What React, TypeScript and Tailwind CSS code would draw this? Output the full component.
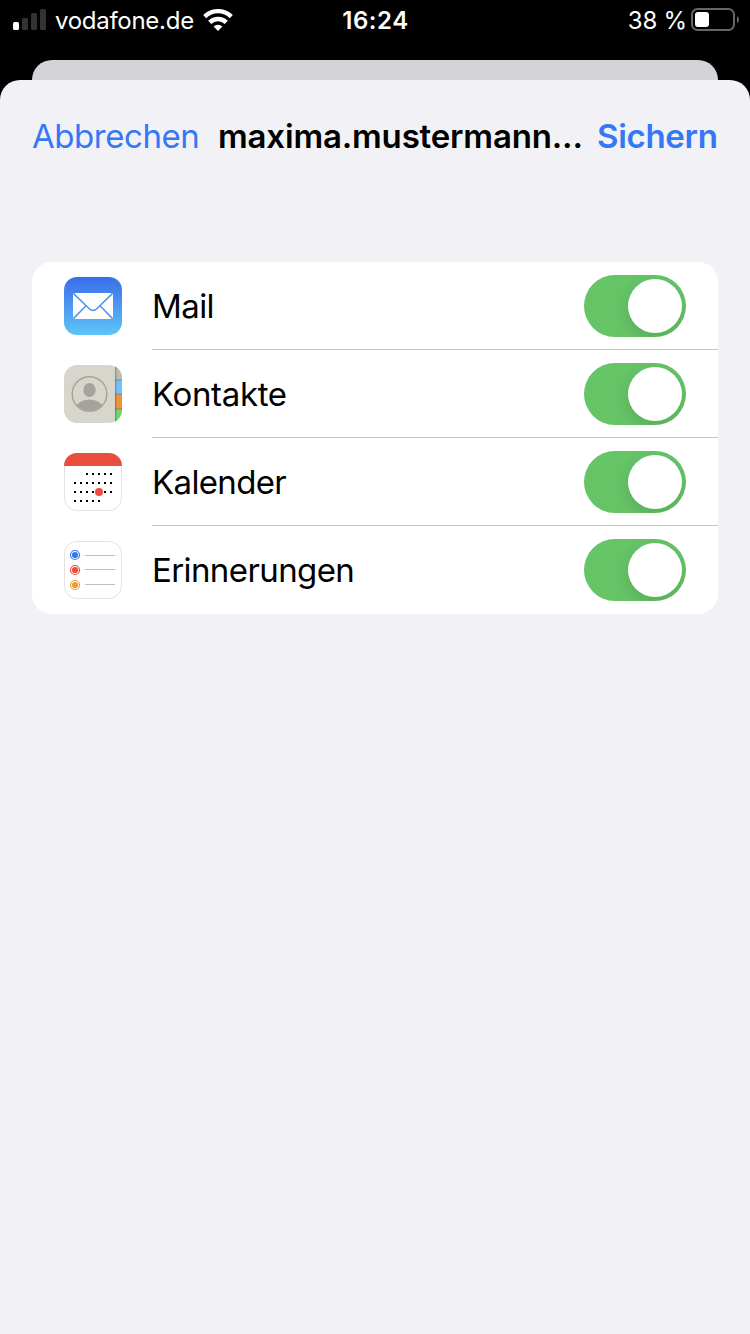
import type { ReactNode } from 'react';

function SignalIcon() {
  return (
    <svg width="33" height="21" viewBox="0 0 33 21" className="shrink-0">
      <rect x="0" y="13" width="6" height="8" rx="1.5" fill="#fff" />
      <rect x="9" y="9" width="6" height="12" rx="1.5" fill="#333" />
      <rect x="18" y="4" width="6" height="17" rx="1.5" fill="#333" />
      <rect x="27" y="0" width="6" height="21" rx="1.5" fill="#333" />
    </svg>
  );
}

function WifiIcon() {
  return (
    <svg width="30" height="22" viewBox="0 0 30 22" className="shrink-0">
      <g fill="none" stroke="#fff" strokeWidth="4.4">
        <path d="M1.7 7.6 A19 19 0 0 1 28.3 7.6" />
        <path d="M6.7 13.3 A12 12 0 0 1 23.3 13.3" />
      </g>
      <path d="M10.6 17.4 A6.4 6.4 0 0 1 19.4 17.4 L15 22 Z" fill="#fff" />
    </svg>
  );
}

function BatteryIcon() {
  return (
    <svg width="48" height="24" viewBox="0 0 48 24" className="shrink-0">
      <rect x="1" y="1" width="42" height="21" rx="5.5" fill="none" stroke="#666" strokeWidth="2" />
      <rect x="4" y="4" width="14" height="15" rx="3" fill="#fff" />
      <path d="M46 8 Q48 9 48 11.5 Q48 14 46 15 Z" fill="#666" />
    </svg>
  );
}

function MailIcon() {
  return (
    <svg width="58" height="58" viewBox="0 0 58 58">
      <defs>
        <linearGradient id="mail" x1="0" y1="0" x2="0" y2="1">
          <stop offset="0" stopColor="#3a6de9" />
          <stop offset="1" stopColor="#5ec4f8" />
        </linearGradient>
      </defs>
      <rect width="58" height="58" rx="13" fill="url(#mail)" />
      <rect x="9" y="16" width="40" height="26" rx="0.8" fill="#fff" />
      <g fill="none" stroke="#4c94ee" strokeWidth="1.5">
        <path d="M9.4 16.4 L25 31.5 Q29 35.5 33 31.5 L48.6 16.4" />
        <path d="M9.4 41.6 L21.8 29 M48.6 41.6 L36.2 29" />
      </g>
    </svg>
  );
}

function ContactsIcon() {
  return (
    <svg width="58" height="58" viewBox="0 0 58 58">
      <defs>
        <clipPath id="contactsShape">
          <rect width="58" height="58" rx="13" />
        </clipPath>
        <clipPath id="portrait">
          <circle cx="25.5" cy="29" r="16.8" />
        </clipPath>
        <linearGradient id="tabShade" x1="0" y1="0" x2="1" y2="0">
          <stop offset="0" stopColor="#000" stopOpacity="0.3" />
          <stop offset="1" stopColor="#000" stopOpacity="0" />
        </linearGradient>
      </defs>
      <g clipPath="url(#contactsShape)">
        <rect width="58" height="58" fill="#d6d6cd" />
        <rect x="51" width="7" height="15" fill="#bcbcb3" />
        <rect x="51" y="15" width="7" height="14.5" fill="#72c1f8" />
        <rect x="51" y="29.5" width="7" height="14.5" fill="#ed9536" />
        <rect x="51" y="44" width="7" height="14" fill="#6fd672" />
        <path d="M51 15 H58 M51 29.3 H58 M51 44 H58" stroke="#665f50" strokeOpacity="0.55" strokeWidth="1" />
        <rect x="51" width="2" height="58" fill="url(#tabShade)" />
      </g>
      <circle cx="25.5" cy="29" r="17.3" fill="none" stroke="#a8a29c" strokeWidth="1.4" />
      <ellipse cx="25.5" cy="25" rx="6.2" ry="7" fill="#a8a29c" />
      <ellipse cx="25.5" cy="44" rx="13.8" ry="9.4" fill="#a8a29c" clipPath="url(#portrait)" />
    </svg>
  );
}

const calendarRows = [
  { y: 21, from: 2 },
  { y: 30, from: 0 },
  { y: 39, from: 0 },
  { y: 48, from: 0, to: 4 },
];

function CalendarIcon() {
  return (
    <svg width="58" height="58" viewBox="0 0 58 58">
      <defs>
        <clipPath id="calendarShape">
          <rect width="58" height="58" rx="13" />
        </clipPath>
      </defs>
      <rect x="0.5" y="0.5" width="57" height="57" rx="12.5" fill="#fff" stroke="#e2e2e2" />
      <rect width="58" height="13" fill="#e94e3d" clipPath="url(#calendarShape)" />
      {calendarRows.map(({ y, from, to = 6 }) =>
        [0, 1, 2, 3, 4, 5, 6]
          .filter((i) => i >= from && i <= to)
          .map((i) => <rect key={`${y}-${i}`} x={10 + i * 6} y={y - 1} width="2" height="2" fill="#000" />),
      )}
      <circle cx="35" cy="39" r="4" fill="#e94e3d" />
    </svg>
  );
}

const reminderRows = [
  { y: 14, line: 14.5, color: '#3478f6' },
  { y: 29, line: 28.5, color: '#e94e3d' },
  { y: 44, line: 43.5, color: '#ee9c38' },
];

function RemindersIcon() {
  return (
    <svg width="58" height="58" viewBox="0 0 58 58">
      <rect x="0.5" y="0.5" width="57" height="57" rx="12.5" fill="#fff" stroke="#e2e2e2" />
      {reminderRows.map(({ y, line, color }) => (
        <g key={y}>
          <circle cx="11" cy={y} r="4.5" fill="none" stroke={color} strokeWidth="1.2" />
          <circle cx="11" cy={y} r="3.1" fill={color} />
          <path d={`M21 ${line} H51`} stroke="#bdbdbf" strokeWidth="1" />
        </g>
      ))}
    </svg>
  );
}

function Toggle() {
  return (
    <button
      role="switch"
      aria-checked="true"
      className="flex h-[62px] w-[102px] shrink-0 items-center justify-end overflow-hidden rounded-full bg-[#65c466] pr-1"
    >
      <span className="size-[54px] rounded-full bg-white shadow-[0_6px_16px_rgba(0,0,0,0.12)]" />
    </button>
  );
}

interface RowProps {
  icon: ReactNode;
  label: string;
  tracking: string;
  last?: boolean;
}

function Row({ icon, label, tracking, last }: RowProps) {
  return (
    <div className="flex h-[88px] pl-8">
      <div className="w-[88px] shrink-0 pt-[15px]">{icon}</div>
      <div
        className={`flex flex-1 items-start justify-between pr-8 pt-[13px] ${last ? '' : 'border-b border-[#c6c6c8]'}`}
      >
        <span className={`pt-[11px] text-[33px] leading-[40px] text-black ${tracking}`}>{label}</span>
        <Toggle />
      </div>
    </div>
  );
}

export default function App() {
  return (
    <div className="flex h-[1334px] w-[750px] flex-col overflow-hidden bg-black font-['Inter',sans-serif]">
      <div className="grid h-[60px] shrink-0 grid-cols-[1fr_auto_1fr] items-start text-white">
        <div className="flex items-start pl-[13px] pt-[9px]">
          <SignalIcon />
          <span className="ml-[9px] w-[140px] text-[24px] leading-6 tracking-[-0.28px]">vodafone.de</span>
          <span className="ml-2">
            <WifiIcon />
          </span>
        </div>
        <span className="pl-px pt-[9px] text-[24px] font-semibold leading-6 tracking-[0.6px]">16:24</span>
        <div className="flex items-start justify-end pr-[11px] pt-2">
          <span className="mr-[4px] mt-px text-[24px] leading-6 tracking-[-0.2px]">38 %</span>
          <BatteryIcon />
        </div>
      </div>

      <div className="mx-8 h-5 shrink-0 rounded-t-[20px] bg-[#d4d3d8]" />

      <div className="flex flex-1 flex-col rounded-t-[20px] bg-[#f2f1f6]">
        <header className="flex h-[182px] items-start whitespace-nowrap pl-8 pr-8 pt-9 text-[33px] leading-[40px]">
          <button className="w-[186px] shrink-0 text-left tracking-[-0.45px] text-[#3478f6]">Abbrechen</button>
          <h1 className="w-[379px] shrink-0 font-semibold tracking-[-0.17px] text-black">maxima.mustermann...</h1>
          <button className="text-left font-semibold tracking-[-0.3px] text-[#3478f6]">Sichern</button>
        </header>
        <main className="mx-8 rounded-[20px] bg-white">
          <Row icon={<MailIcon />} label="Mail" tracking="tracking-[-0.6px]" />
          <Row icon={<ContactsIcon />} label="Kontakte" tracking="tracking-[-0.35px]" />
          <Row icon={<CalendarIcon />} label="Kalender" tracking="tracking-[-0.65px]" />
          <Row icon={<RemindersIcon />} label="Erinnerungen" tracking="tracking-[-0.6px]" last />
        </main>
      </div>
    </div>
  );
}
